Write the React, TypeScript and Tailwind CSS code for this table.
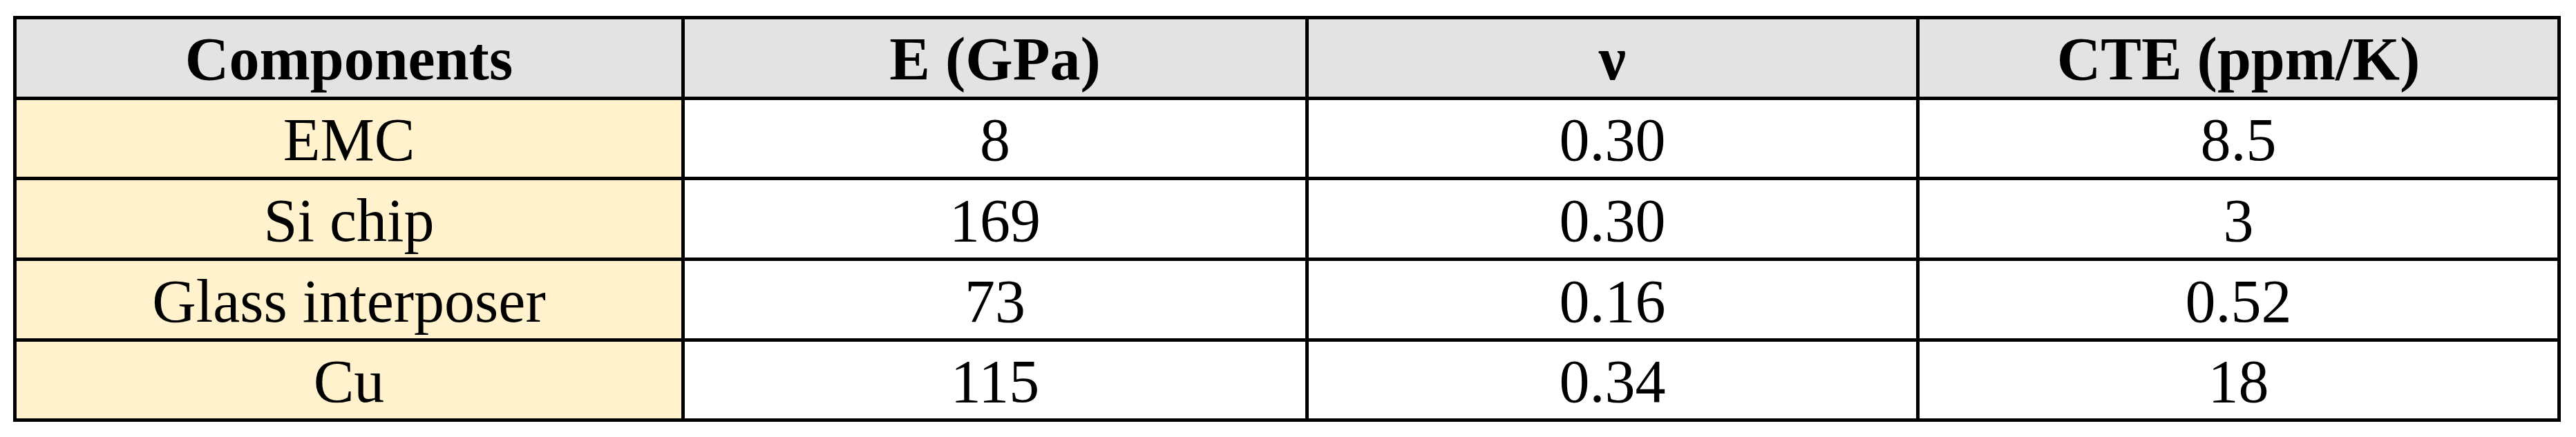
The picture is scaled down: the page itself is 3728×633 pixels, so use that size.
import React from 'react';

const rows = [
  { name: 'EMC', e: '8', nu: '0.30', cte: '8.5' },
  { name: 'Si chip', e: '169', nu: '0.30', cte: '3' },
  { name: 'Glass interposer', e: '73', nu: '0.16', cte: '0.52' },
  { name: 'Cu', e: '115', nu: '0.34', cte: '18' },
];

const headers = ['Components', 'E (GPa)', 'ν', 'CTE (ppm/K)'];

export default function App() {
  return (
    <div className="w-[3728px] h-[633px] bg-white pl-[19px] pt-[23px] font-['Liberation_Serif',serif] text-black">
      {/* the black background shows through the 5px gaps as cell borders */}
      <div className="inline-grid grid-cols-[962px_898px_879px_923px] grid-rows-[112px_111px_112px_112px_111px] gap-[5px] p-[5px] bg-black">
        {headers.map((h) => (
          <div key={h} className="bg-[#e3e3e3] flex items-center justify-center pt-[3px] text-[88px] font-bold leading-normal">
            {h}
          </div>
        ))}
        {rows.map((r) => (
          <React.Fragment key={r.name}>
            <div className="bg-[#fff2cc] flex items-center justify-center pt-[5px] text-[88px] leading-normal">{r.name}</div>
            <div className="bg-white flex items-center justify-center pt-[5px] text-[88px] leading-normal">{r.e}</div>
            <div className="bg-white flex items-center justify-center pt-[5px] text-[88px] leading-normal">{r.nu}</div>
            <div className="bg-white flex items-center justify-center pt-[5px] text-[88px] leading-normal">{r.cte}</div>
          </React.Fragment>
        ))}
      </div>
    </div>
  );
}
